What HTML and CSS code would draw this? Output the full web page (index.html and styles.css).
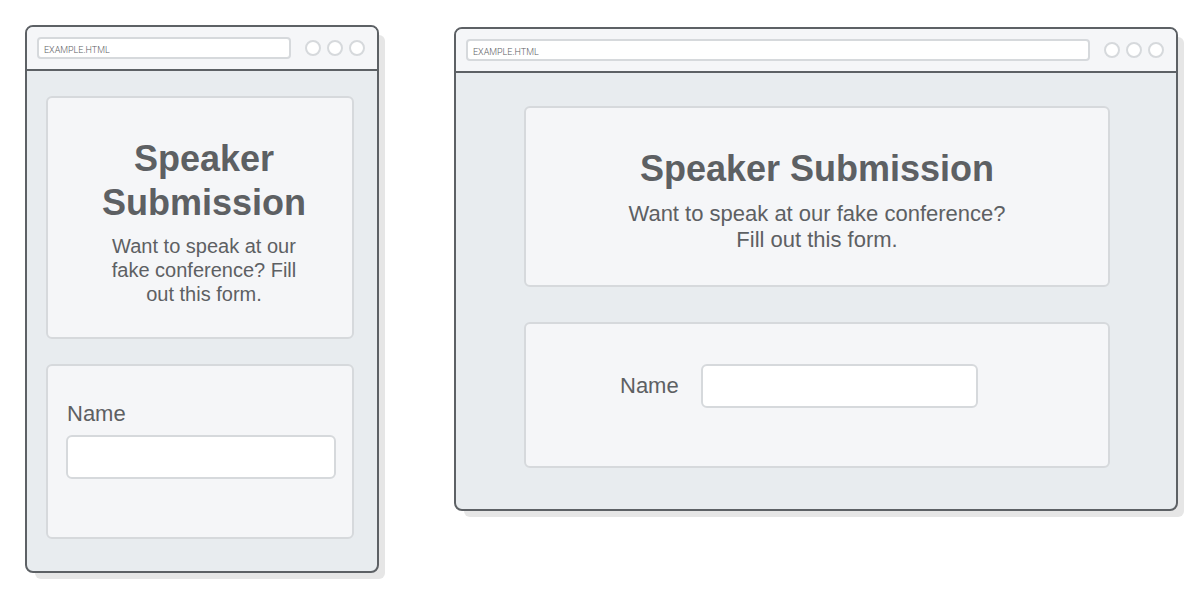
FILE: index.html
```html
<!DOCTYPE html>
<html lang="en">
<head>
  <meta charset="utf-8">
  <title>Speaker Submission</title>
  <link rel="stylesheet" href="styles.css">
</head>
<body>
  <main class="stage">
    <section class="browser browser-narrow">
      <header class="toolbar">
        <input class="address" type="text" value="EXAMPLE.HTML" aria-label="Address">
        <div class="dots"><span class="dot"></span><span class="dot"></span><span class="dot"></span></div>
      </header>
      <div class="viewport">
        <div class="card intro">
          <h1 class="title">Speaker Submission</h1>
          <p class="lead">Want to speak at our fake conference? Fill out this form.</p>
        </div>
        <form class="card form">
          <label class="label" for="name-narrow">Name</label>
          <input class="field" id="name-narrow" type="text">
        </form>
      </div>
    </section>

    <section class="browser browser-wide">
      <header class="toolbar">
        <input class="address" type="text" value="EXAMPLE.HTML" aria-label="Address">
        <div class="dots"><span class="dot"></span><span class="dot"></span><span class="dot"></span></div>
      </header>
      <div class="viewport">
        <div class="card intro">
          <h1 class="title">Speaker Submission</h1>
          <p class="lead">Want to speak at our fake conference? Fill out this form.</p>
        </div>
        <form class="card form">
          <label class="label" for="name-wide">Name</label>
          <input class="field" id="name-wide" type="text">
        </form>
      </div>
    </section>
  </main>
</body>
</html>
```

FILE: styles.css
```css
* {
  box-sizing: border-box;
}

body {
  margin: 0;
  background: #fff;
  color: #5d6063;
  font-family: "Liberation Sans", Arial, sans-serif;
}

.stage {
  display: grid;
  grid-template-columns: minmax(0, 354fr) minmax(0, 724fr);
  align-items: start;
  gap: 75px;
  padding: 25px 22px 19px 25px;
}

.browser {
  border: 2px solid #5d6165;
  border-radius: 8px;
  background: #e8ecef;
  box-shadow: 8px 8px 0 -2px #e6e6e6;
}

.browser-wide {
  margin-top: 2px;
}

.toolbar {
  display: flex;
  align-items: center;
  gap: 14px;
  padding: 10px 12px 10px 10px;
  border-bottom: 2px solid #5d6165;
  border-radius: 6px 6px 0 0;
  background: #f5f6f8;
}

.address {
  flex: 1;
  min-width: 0;
  height: 22px;
  padding: 4px 5px 0;
  border: 2px solid #d6d9dc;
  border-radius: 4px;
  background: #fff;
  color: #5d6063;
  font: 300 9px Roboto, sans-serif;
}

.dots {
  display: flex;
  gap: 6px;
}

.dot {
  width: 16px;
  height: 16px;
  border: 2px solid #d6d9dc;
  border-radius: 50%;
  background: #fff;
}

.viewport {
  display: grid;
  grid-template-columns: minmax(0, 1fr);
}

.card {
  border: 2px solid #d6d9dc;
  border-radius: 6px;
  background: #f5f6f8;
}

.title {
  margin: 0;
  font-size: 36px;
  line-height: 44px;
}

.intro {
  display: grid;
  justify-items: center;
  text-align: center;
}

.lead {
  margin: 0;
  font-size: 22px;
  line-height: 26px;
}

.label {
  font-size: 22px;
  line-height: 26px;
}

.field {
  min-width: 0;
  height: 44px;
  padding: 0 10px;
  border: 2px solid #d6d9dc;
  border-radius: 6px;
  background: #fff;
  color: inherit;
  font: 22px "Liberation Sans", Arial, sans-serif;
}

.browser-narrow .viewport {
  gap: 25px;
  padding: 25px 23px 32px 19px;
}

.browser-narrow .intro {
  gap: 9px;
  padding: 39px 32px 31px 40px;
}

.browser-narrow .lead {
  max-width: 200px;
  font-size: 20px;
  line-height: 24px;
}

.browser-narrow .form {
  display: grid;
  gap: 8px;
  padding: 35px 16px 58px 18px;
}

.browser-narrow .label {
  padding-left: 1px;
}

.browser-wide .viewport {
  gap: 35px;
  padding: 33px 66px 41px 68px;
}

.browser-wide .intro {
  gap: 10px;
  padding: 39px 32px 32px;
}

.browser-wide .lead {
  max-width: 400px;
}

.browser-wide .form {
  display: flex;
  align-items: center;
  gap: 22px;
  padding: 40px 130px 58px 94px;
}

.browser-wide .field {
  flex: 1;
}
```
